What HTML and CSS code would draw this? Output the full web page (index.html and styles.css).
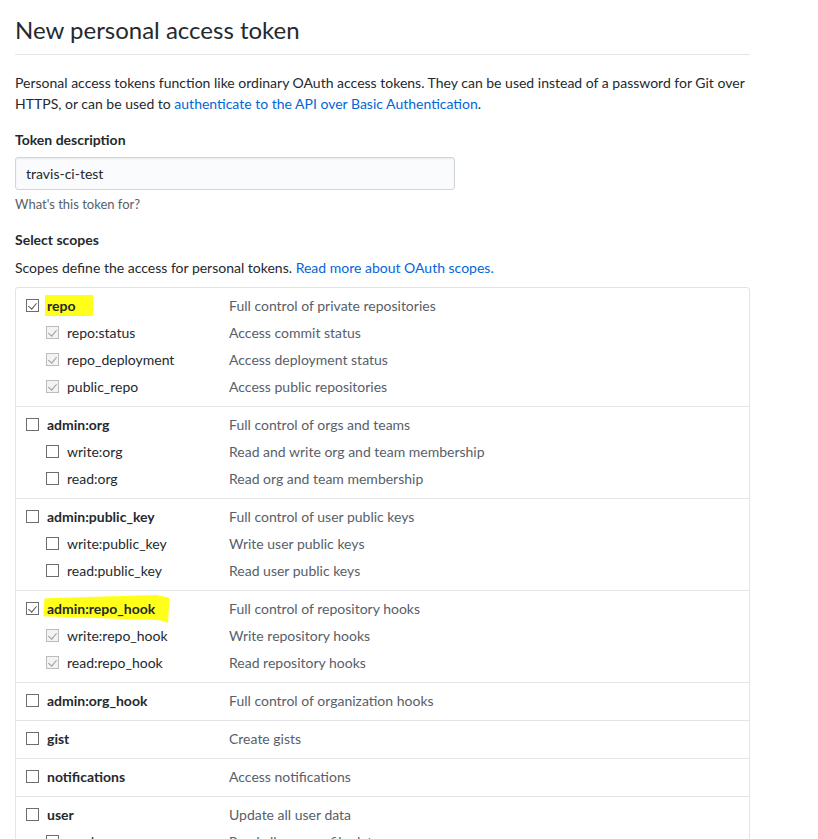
FILE: index.html
```html
<!DOCTYPE html>
<html>
<head>
<meta charset="utf-8">
<link rel="stylesheet" href="styles.css">
</head>
<body>
<div class="page">
  <h1 class="title">New personal access token</h1>
  <p class="intro">Personal access tokens function like ordinary OAuth access tokens. They can be used instead of a password for Git over HTTPS, or can be used to <a href="#">authenticate to the API over Basic Authentication</a>.</p>

  <div class="field">
    <label class="field-label">Token description</label>
    <div class="input">travis-ci-test</div>
    <div class="note">What's this token for?</div>
  </div>

  <div class="field">
    <div class="field-label">Select scopes</div>
    <p class="scopes-intro">Scopes define the access for personal tokens. <a href="#">Read more about OAuth scopes.</a></p>
  </div>

  <div class="scopes">
    <div class="group">
      <div class="row main"><span class="cb checked"></span><span class="name"><span class="hl">repo</span></span><span class="desc">Full control of private repositories</span></div>
      <div class="row sub"><span class="cb checked disabled"></span><span class="name">repo:status</span><span class="desc">Access commit status</span></div>
      <div class="row sub"><span class="cb checked disabled"></span><span class="name">repo_deployment</span><span class="desc">Access deployment status</span></div>
      <div class="row sub"><span class="cb checked disabled"></span><span class="name">public_repo</span><span class="desc">Access public repositories</span></div>
    </div>
    <div class="group">
      <div class="row main"><span class="cb"></span><span class="name">admin:org</span><span class="desc">Full control of orgs and teams</span></div>
      <div class="row sub"><span class="cb"></span><span class="name">write:org</span><span class="desc">Read and write org and team membership</span></div>
      <div class="row sub"><span class="cb"></span><span class="name">read:org</span><span class="desc">Read org and team membership</span></div>
    </div>
    <div class="group">
      <div class="row main"><span class="cb"></span><span class="name">admin:public_key</span><span class="desc">Full control of user public keys</span></div>
      <div class="row sub"><span class="cb"></span><span class="name">write:public_key</span><span class="desc">Write user public keys</span></div>
      <div class="row sub"><span class="cb"></span><span class="name">read:public_key</span><span class="desc">Read user public keys</span></div>
    </div>
    <div class="group">
      <div class="row main"><span class="cb checked"></span><span class="name"><span class="hl brush">admin:repo_hook</span></span><span class="desc">Full control of repository hooks</span></div>
      <div class="row sub"><span class="cb checked disabled"></span><span class="name">write:repo_hook</span><span class="desc">Write repository hooks</span></div>
      <div class="row sub"><span class="cb checked disabled"></span><span class="name">read:repo_hook</span><span class="desc">Read repository hooks</span></div>
    </div>
    <div class="group">
      <div class="row main"><span class="cb"></span><span class="name">admin:org_hook</span><span class="desc">Full control of organization hooks</span></div>
    </div>
    <div class="group">
      <div class="row main"><span class="cb"></span><span class="name">gist</span><span class="desc">Create gists</span></div>
    </div>
    <div class="group">
      <div class="row main"><span class="cb"></span><span class="name">notifications</span><span class="desc">Access notifications</span></div>
    </div>
    <div class="group">
      <div class="row main"><span class="cb"></span><span class="name">user</span><span class="desc">Update all user data</span></div>
      <div class="row sub"><span class="cb"></span><span class="name">read:user</span><span class="desc">Read all user profile data</span></div>
      <div class="row sub"><span class="cb"></span><span class="name">user:email</span><span class="desc">Access user email addresses (read-only)</span></div>
    </div>
  </div>
</div>
</body>
</html>
```
FILE: styles.css
```css
* { box-sizing: border-box; }
html, body { margin: 0; padding: 0; background: #fff; }
body {
  font-family: "Segoe UI", Lato, "Open Sans", "Liberation Sans", sans-serif;
  font-size: 14px;
  line-height: 21px;
  color: #24292e;
}
.page {
  width: 750px;
  padding: 7px 0 0 15px;
}
a { color: #0366d6; text-decoration: none; }
.title {
  margin: 0;
  font-size: 24px;
  font-weight: 400;
  line-height: 46px;
  padding-bottom: 1px;
  border-bottom: 1px solid #e1e4e8;
}
.intro {
  margin: 17px 0 15px;
}
.field { margin-bottom: 14px; }
.field-label {
  display: block;
  font-weight: 700;
  margin-bottom: 7px;
}
.input {
  width: 440px;
  height: 33px;
  padding: 5px 10px;
  background: #fafbfc;
  border: 1px solid #d1d5da;
  border-radius: 3px;
  box-shadow: inset 0 1px 2px rgba(27,31,35,0.075);
}
.note {
  margin-top: 4px;
  font-size: 13px;
  color: #586069;
}
.scopes-intro { margin: 0 0 0 0; }
.scopes {
  margin-top: -5px;
  border: 1px solid #e1e4e8;
  border-radius: 3px;
  width: 735px;
}
.group {
  padding: 7px 10px 9px;
  display: flex;
  flex-direction: column;
  gap: 6px;
}
.group + .group { border-top: 1px solid #e1e4e8; }
.row {
  display: grid;
  grid-template-columns: 13px 174px 1fr;
  column-gap: 8px;
  align-items: center;
  height: 21px;
}
.row.sub {
  padding-left: 20px;
  grid-template-columns: 13px 154px 1fr;
}
.main .name { font-weight: 700; }
.desc { color: #586069; }
.cb {
  width: 13px;
  height: 13px;
  border: 1px solid #6d6d6d;
  background: #fff;
  position: relative;
}
.cb.checked::after {
  content: "";
  position: absolute;
  left: 3px;
  top: 1px;
  width: 4px;
  height: 7px;
  border-right: 1px solid #555;
  border-bottom: 1px solid #555;
  transform: rotate(40deg);
}
.cb.disabled { border-color: #bcbcbc; background: #f3f3f3; }
.cb.disabled::after { border-color: #9a9a9a; }
.hl {
  position: relative;
  z-index: 0;
}
.hl::before {
  content: "";
  position: absolute;
  z-index: -1;
  background: #ffff1a;
  left: -2px;
  right: -17px;
  top: -2px;
  bottom: -2px;
}
.hl.brush::before {
  left: -5px;
  right: -14px;
  top: -5px;
  bottom: -6px;
  clip-path: polygon(2% 12%, 90% 0%, 100% 10%, 99% 100%, 93% 90%, 1% 76%);
}
```
